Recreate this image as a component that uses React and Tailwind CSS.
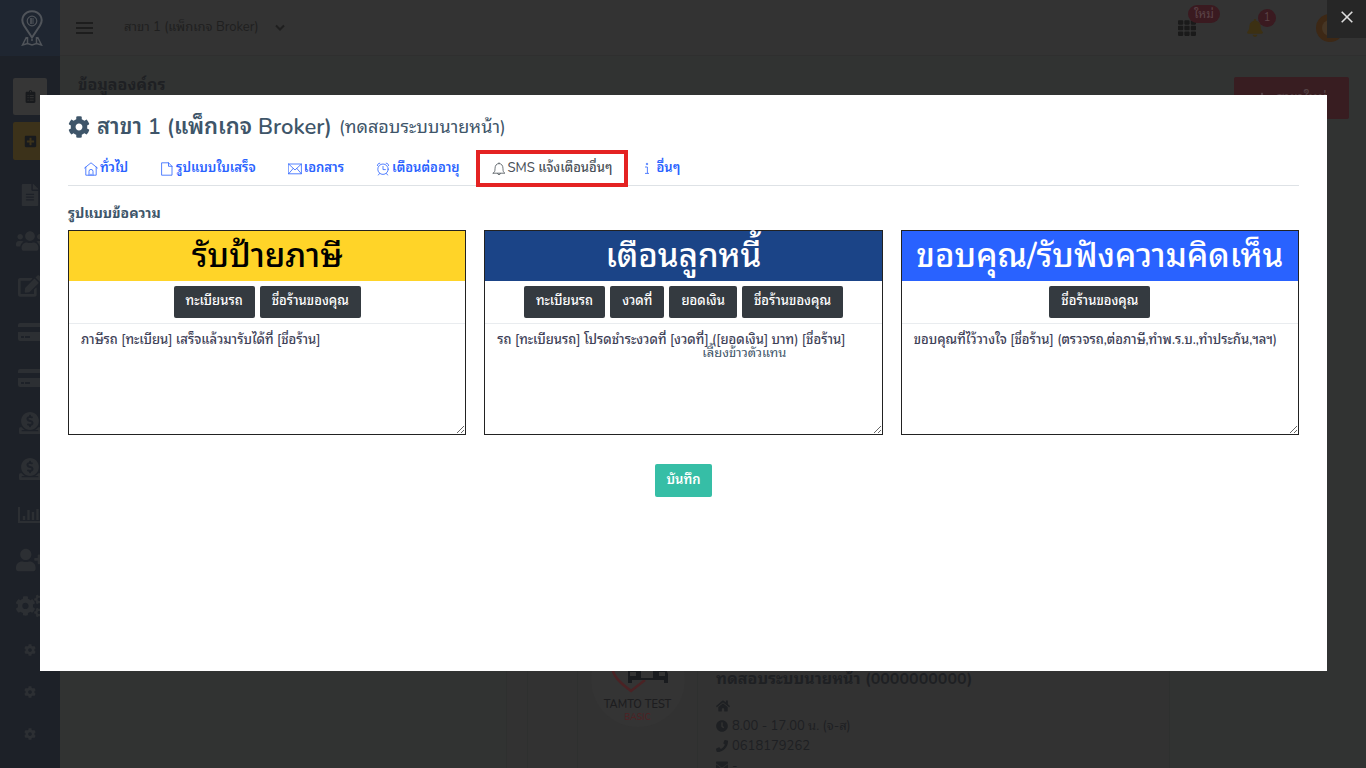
import { useState } from "react"
import {
  FaBell,
  FaClipboardList,
  FaClock,
  FaCog,
  FaCogs,
  FaDonate,
  FaEdit,
  FaEnvelope,
  FaFileAlt,
  FaHome,
  FaPhone,
  FaPlus,
  FaPlusSquare,
  FaTh,
  FaUserPlus,
  FaUsers,
} from "react-icons/fa"

const menuItems = [
  { label: "ใบเสร็จ", icon: FaFileAlt, size: "text-[22px]" },
  { label: "ลูกค้า", icon: FaUsers, size: "text-[28px]" },
  { label: "แก้ไข", icon: FaEdit, size: "text-2xl" },
  { label: "บัตร", icon: CardIcon, size: "text-[22px]" },
  { label: "ชำระเงิน", icon: CardIcon, size: "text-[22px]" },
  { label: "รายรับ", icon: FaDonate, size: "text-[22px]" },
  { label: "รายจ่าย", icon: FaDonate, size: "text-[22px]" },
  { label: "รายงาน", icon: ChartIcon, size: "text-[22px]" },
  { label: "เพิ่มผู้ใช้", icon: FaUserPlus, size: "text-[28px]" },
  { label: "ตั้งค่า", icon: FaCogs, size: "text-[28px]" },
]

const tabs = [
  { id: "general", label: "ทั่วไป", icon: HomeIcon },
  { id: "receipt", label: "รูปแบบใบเสร็จ", icon: FileIcon },
  { id: "document", label: "เอกสาร", icon: MailIcon },
  { id: "renew", label: "เตือนต่ออายุ", icon: AlarmIcon },
  { id: "sms", label: "SMS แจ้งเตือนอื่นๆ", icon: BellIcon },
  { id: "other", label: "อื่นๆ", icon: InfoIcon },
]

const templates = [
  {
    id: "tax",
    title: "รับป้ายภาษี",
    header: "bg-[#ffd428] text-black",
    tags: ["ทะเบียนรถ", "ชื่อร้านของคุณ"],
    text: "ภาษีรถ [ทะเบียน] เสร็จแล้วมารับได้ที่ [ชื่อร้าน]",
  },
  {
    id: "debt",
    title: "เตือนลูกหนี้",
    header: "bg-[#1b4487] text-white",
    tags: ["ทะเบียนรถ", "งวดที่", "ยอดเงิน", "ชื่อร้านของคุณ"],
    text: "รถ [ทะเบียนรถ] โปรดชำระงวดที่ [งวดที่] ([ยอดเงิน] บาท) [ชื่อร้าน]",
    note: "เลี้ยงข้าวตัวแทน",
  },
  {
    id: "thanks",
    title: "ขอบคุณ/รับฟังความคิดเห็น",
    header: "bg-[#2962ff] text-white",
    tags: ["ชื่อร้านของคุณ"],
    text: "ขอบคุณที่ไว้วางใจ [ชื่อร้าน] (ตรวจรถ,ต่อภาษี,ทำพ.ร.บ.,ทำประกัน,ฯลฯ)",
  },
]

function LineIcon({ children }) {
  return (
    <svg
      viewBox="0 0 14 14"
      className="size-3.5 shrink-0"
      fill="none"
      stroke="currentColor"
      strokeWidth="0.8"
      strokeLinejoin="round"
      strokeLinecap="round"
      aria-hidden="true"
    >
      {children}
    </svg>
  )
}

function HomeIcon() {
  return (
    <LineIcon>
      <path d="M.6 6 7 .8 13.400 6M1.800 5.200v8h10.400v-8M5 13.200V9.400a2 2 0 0 1 4 0v3.800M7 13.200v-1" />
    </LineIcon>
  )
}

function FileIcon() {
  return (
    <LineIcon>
      <path d="M2 .8h6.5L12 4.3v8.9H2zM8.5.8v3.5H12" />
    </LineIcon>
  )
}

function MailIcon() {
  return (
    <LineIcon>
      <path d="M.6 2h12.8v9.8H.6zM.6 2 7 8l6.4-6M.6 11.8l4.6-5.4M13.4 11.8 8.8 6.4" />
    </LineIcon>
  )
}

function AlarmIcon() {
  return (
    <LineIcon>
      <circle cx="7" cy="7.2" r="5.200" />
      <path d="M7 4.400v3.200h2.400M3.400 11.600l-1 1.400M10.600 11.600l1 1.400M1.400 3.600c0-1.400 1-2.400 2.400-2.400M12.600 3.600c0-1.400-1-2.400-2.400-2.400" />
    </LineIcon>
  )
}

function BellIcon() {
  return (
    <LineIcon>
      <path d="M1.2 11.2h11.6c-1.4-1-1.8-2-1.8-4.4C11 3.6 9.6 1.6 7 1.6S3 3.6 3 6.8c0 2.4-.4 3.4-1.8 4.4zM5.6 11.6c.2 1.6 2.6 1.6 2.8 0M7 .8v.8" />
    </LineIcon>
  )
}

function InfoIcon() {
  return (
    <svg
      viewBox="0 0 6 14"
      className="mr-1 h-3.5 w-1.5 shrink-0"
      fill="none"
      stroke="currentColor"
      strokeWidth="0.8"
      aria-hidden="true"
    >
      <path d="M2.400 1.400h1.200v1.200H2.400zM1 5h2.400v6.200M1 11.400h4" />
    </svg>
  )
}

function CardIcon() {
  return (
    <svg viewBox="0 0 26 20" className="h-5 w-[26px]" fill="currentColor" aria-hidden="true">
      <path d="M3 1h20a2 2 0 0 1 2 2v2H1V3a2 2 0 0 1 2-2z" />
      <path
        fillRule="evenodd"
        d="M1 10h24v7a2 2 0 0 1-2 2H3a2 2 0 0 1-2-2zM4 14v2h3v-2zM8 14v2h5v-2z"
      />
    </svg>
  )
}

function ChartIcon() {
  return (
    <svg viewBox="0 0 24 18" className="h-[18px] w-6" fill="none" stroke="currentColor" aria-hidden="true">
      <path strokeWidth="2" d="M1 1v15h22" />
      <path strokeWidth="2.4" d="M6 14v-4M10.500 14V4M15 14V6M19.500 14V3" />
    </svg>
  )
}

function Logo() {
  return (
    <svg viewBox="0 0 22 36" className="h-9 w-[22px] text-[#50545a]" fill="none" stroke="currentColor" aria-hidden="true">
      <path strokeWidth="2" d="M11 27.500 3 15.500C-1.500 8 4 1.200 11 1.200S23.500 8 19 15.500z" />
      <circle cx="11" cy="11" r="4.800" strokeWidth="1.200" />
      <path strokeWidth="1.200" d="M9 9h4M9 11h4M9 13h4M10 8v6" />
      <path strokeWidth="1.500" d="M5.500 27 1.500 35l5-1.500 4.500 1.500 4.500-1.500 5 1.500-4-8M6.500 33.500V27M15.500 33.500V27M11 29v2" />
    </svg>
  )
}

function CarBadge() {
  return (
    <div className="flex size-[94px] shrink-0 flex-col items-center rounded-full bg-[#343434] pt-[22px]">
      <svg viewBox="0 0 60 44" className="h-11 w-[60px] shrink-0" fill="none" aria-hidden="true">
        <path d="M4 10c0 12 10 19 19 26l14-11" stroke="#4a2224" strokeWidth="2.500" />
        <path
          fill="#191b1e"
          fillRule="evenodd"
          d="M20 14h38l2 5v9h-4v-3H24v3h-4v-9zM22 17v4h6v-4zM51 17v4h6v-4zM33 16v7h12v-7z"
        />
      </svg>
      <p className="text-[11px] leading-3 font-semibold text-[#1d1d1f]">TAMTO TEST</p>
      <p className="text-[9px] leading-3 font-semibold text-[#4d2325]">BASIC</p>
    </div>
  )
}

const Sidebar = () => (
  <aside className="flex w-[60px] shrink-0 flex-col items-center bg-[#1d2128] text-[#2c2f33]">
    <div className="flex h-14 w-full items-center justify-center bg-[#1f2631] pl-1">
      <Logo />
    </div>
    <button aria-label="งาน" className="mt-[22px] flex h-[37px] w-[34px] items-center justify-center rounded-xs bg-[#363636] text-[#181a1d]">
      <FaClipboardList className="text-[13px]" />
    </button>
    <button aria-label="เพิ่ม" className="mt-[7px] flex h-[38px] w-[34px] items-center justify-center rounded-xs bg-[#3c321a] text-[#181a1d]">
      <FaPlusSquare className="text-[13px]" />
    </button>
    <nav className="mt-3 flex h-[457px] w-full flex-col">
      {menuItems.map(({ label, icon: Icon, size }) => (
        <a key={label} href="#" aria-label={label} className={`flex flex-1 items-center justify-center ${size}`}>
          <Icon />
        </a>
      ))}
    </nav>
    {["สาขา", "สิทธิ์", "ระบบ"].map((label) => (
      <a key={label} href="#" aria-label={label} className="flex h-[42px] items-center justify-center text-[12px]">
        <FaCog />
      </a>
    ))}
  </aside>
)

const TopBar = () => (
  <header className="flex h-14 items-center border-b border-[#2f2f2f] bg-[#333333] pr-[22px] pl-4">
    <button aria-label="เมนู" className="flex w-[17px] flex-col gap-[3px]">
      <span className="h-0.5 bg-[#1d1d1d]" />
      <span className="h-0.5 bg-[#1d1d1d]" />
      <span className="h-0.5 bg-[#1d1d1d]" />
    </button>
    <button className="ml-[31px] flex items-center gap-4 text-[13px] text-[#1f1f1f]">
      สาขา 1 (แพ็กเกจ Broker)
      <svg viewBox="0 0 10 8" className="h-2 w-2.5" fill="none" stroke="currentColor" strokeWidth="2" aria-hidden="true">
        <path d="m1 1.500 4 4 4-4" />
      </svg>
    </button>
    <div className="ml-auto flex items-center">
      <button aria-label="แอป" className="relative mr-[50px] text-lg text-[#1a1a1a]">
        <FaTh />
        <span className="absolute -top-3.5 left-2.5 rounded-full bg-[#3a1a20] px-1.5 text-xs leading-[18px] text-[#5a4448]">ใหม่</span>
      </button>
      <button aria-label="แจ้งเตือน" className="relative mr-[52px] text-lg text-[#3c3013]">
        <FaBell />
        <span className="absolute -top-2.5 left-3 size-[18px] rounded-full bg-[#3a1a20] text-center text-[11px] leading-[18px] text-[#5a4448]">1</span>
      </button>
      <span className="flex size-7 items-center justify-center rounded-full bg-[#3d2815]">
        <span className="size-4 rounded-full bg-[#463625]" />
      </span>
    </div>
  </header>
)

const BranchInfo = () => (
  <section className="mt-auto -mb-2 ml-[446px] flex w-[664px] border-l border-[#2e302f] bg-[#323232] pl-5">
    <div className="w-[50px] border-l border-[#2e302f]" />
    <div className="flex w-[121px] justify-center border-x border-[#2e302f]">
      <CarBadge />
    </div>
    <div className="grow border-r border-[#2e302f] pt-9 pl-[18px] text-[13px] leading-5 text-[#1e2023]">
      <h2 className="mb-[7px] text-base leading-5 font-bold">ทดสอบระบบนายหน้า (0000000000)</h2>
      <p className="flex h-5 items-center"><FaHome className="text-sm" /></p>
      <p className="flex items-center gap-1"><FaClock className="text-xs" />8.00 - 17.00 น. (จ-ส)</p>
      <p className="flex items-center gap-1"><FaPhone className="text-xs" />0618179262</p>
      <p className="flex items-center gap-1"><FaEnvelope className="text-xs" />-</p>
    </div>
  </section>
)

const TemplateCard = ({ template }) => {
  const [text, setText] = useState(template.text)

  return (
    <article className="relative flex flex-col border border-[#222222]">
      <h2 className={`flex h-[50px] items-center justify-center pt-0.5 text-[33px] font-medium whitespace-nowrap ${template.header}`}>
        {template.title}
      </h2>
      <div className="flex h-[42px] items-center justify-center gap-[5px]">
        {template.tags.map((tag) => (
          <button
            key={tag}
            type="button"
            onClick={() => setText((prev) => `${prev} [${tag}]`)}
            className="h-8 rounded-xs bg-[#343a40] px-3 text-[13px] font-medium whitespace-nowrap text-white"
          >
            {tag}
          </button>
        ))}
      </div>
      <textarea
        aria-label={template.title}
        value={text}
        onChange={(e) => setText(e.target.value)}
        className="block h-[111px] w-full border-t border-[#e9ecef] px-3 py-1.5 text-[13px] leading-5 font-medium text-[#3e4157] outline-none"
      />
      {template.note && (
        <span className="pointer-events-none absolute top-[112px] left-[217px] text-[13px] leading-5 whitespace-nowrap text-[#3e5569]">
          {template.note}
        </span>
      )}
    </article>
  )
}

const App = () => {
  const [activeTab, setActiveTab] = useState("sms")

  return (
    <div className="relative h-screen overflow-hidden bg-[#313332] font-['Nunito','Noto_Sans_Thai_Looped','Loma',sans-serif]">
      <div className="flex h-full">
        <Sidebar />
        <div className="flex grow flex-col">
          <TopBar />
          <main className="flex grow flex-col">
            <div className="flex items-start justify-between pt-[21px] pr-[17px] pl-[18px]">
              <h1 className="text-base leading-4 font-bold text-[#1e2023]">ข้อมูลองค์กร</h1>
              <button className="flex h-[42px] w-[115px] items-center justify-center gap-2 rounded-xs bg-[#381d21] text-sm text-[#544346]">
                <FaPlus className="text-xs" />
                สาขาใหม่
              </button>
            </div>
            <BranchInfo />
          </main>
        </div>
      </div>

      {/* Branch settings dialog */}
      <div className="absolute inset-0 flex items-center pr-[39px] pb-0.5 pl-10">
        <div role="dialog" aria-modal="true" aria-labelledby="dialog-title" className="min-h-[75vh] w-full bg-white px-7 pt-4">
          <div className="flex h-8 items-center gap-[7px] text-[#3e5569]">
            <FaCog className="text-[22px]" />
            <h1 id="dialog-title" className="text-[22px] font-semibold">สาขา 1 (แพ็กเกจ Broker)</h1>
            <span className="text-lg">(ทดสอบระบบนายหน้า)</span>
          </div>

          <div role="tablist" className="mt-[7px] flex h-9 border-b border-[#dee2e6]">
            {tabs.map(({ id, label, icon: Icon }) => (
              <button
                key={id}
                role="tab"
                aria-selected={activeTab === id}
                onClick={() => setActiveTab(id)}
                className={`flex h-[37px] items-center gap-0.5 px-4 text-[13px] whitespace-nowrap ${
                  activeTab === id
                    ? "font-medium text-[#495057] outline-4 -outline-offset-4 outline-[#e42222]"
                    : "font-semibold text-[#2962ff]"
                }`}
              >
                <Icon />
                {label}
              </button>
            ))}
          </div>

          <h2 className="mt-[18px] mb-1.5 text-sm leading-5 font-bold text-[#3e5569]">รูปแบบข้อความ</h2>

          <div className="grid grid-cols-3 gap-[18px]">
            {templates.map((template) => (
              <TemplateCard key={template.id} template={template} />
            ))}
          </div>

          <div className="mt-[29px] flex justify-center">
            <button className="h-[33px] rounded-xs bg-[#36bea6] px-3 text-[13px] font-semibold text-white">บันทึก</button>
          </div>
        </div>
      </div>

      <button aria-label="ปิด" className="absolute top-0 right-0 flex h-[38px] w-[39px] items-center justify-center bg-[#262626] pb-1 text-[#dddddd]">
        <svg viewBox="0 0 12 12" className="size-3" stroke="currentColor" strokeWidth="1.600" aria-hidden="true">
          <path d="m.7.7 10.600 10.600M11.300.7.7 11.300" />
        </svg>
      </button>
    </div>
  )
}

export default App
